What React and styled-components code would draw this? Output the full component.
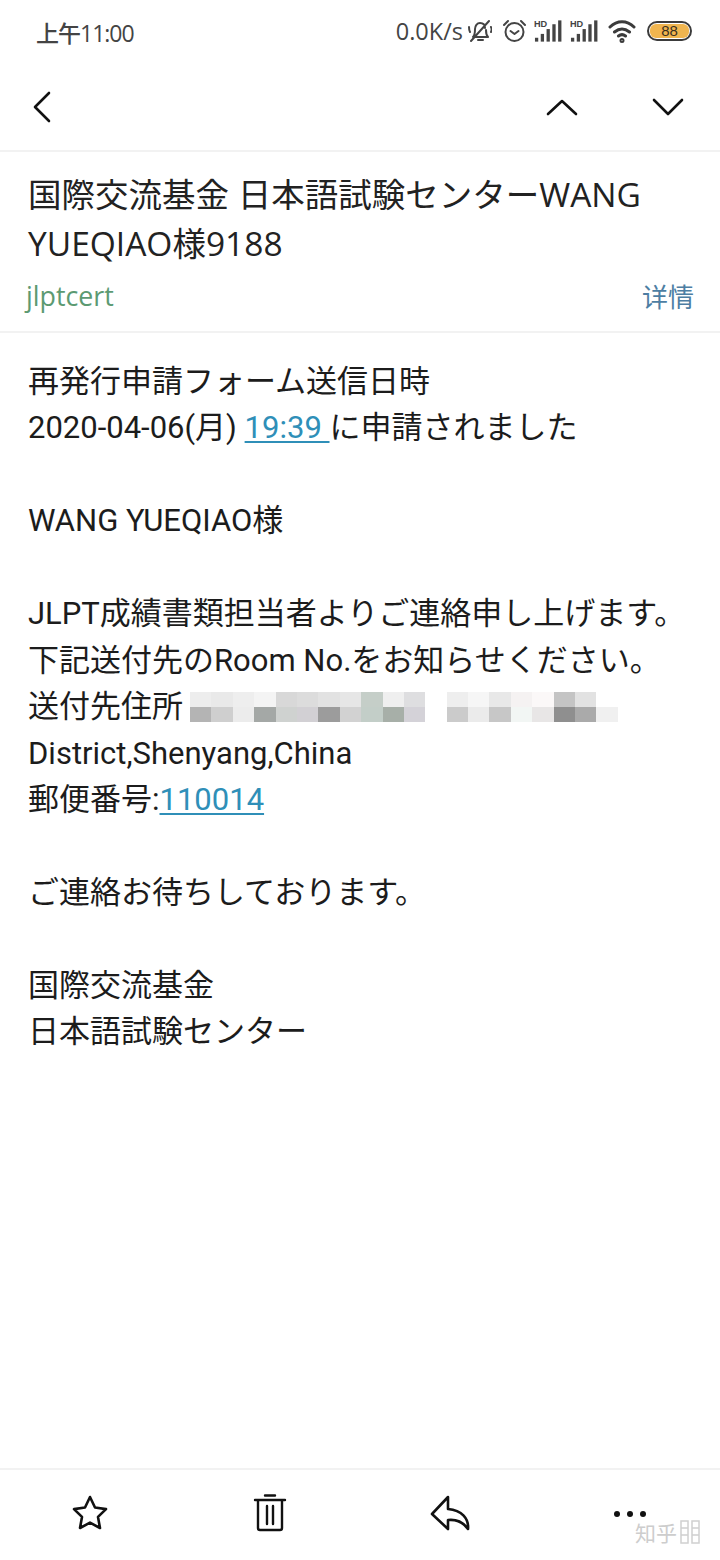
import React from "react";
import styled, { createGlobalStyle } from "styled-components";

const Global = createGlobalStyle`
  html, body { margin: 0; padding: 0; background: #fff; }
  #root { width: 720px; height: 1560px; }
  * { box-sizing: border-box; }
`;

const Page = styled.div`
  position: relative;
  width: 720px;
  height: 1560px;
  display: flex;
  flex-direction: column;
  background: #fff;
  overflow: hidden;
  font-family: Roboto, "Noto Sans CJK JP", sans-serif;
  color: #1d1d1d;
`;

const StatusBar = styled.div`
  height: 64px;
  flex: none;
  display: flex;
  align-items: center;
  justify-content: space-between;
  padding: 0 28px 0 36px;
  color: #444;
  font-family: "Open Sans", "Noto Sans CJK SC", sans-serif;
`;

const Clock = styled.span`
  font-size: 23px;
  letter-spacing: -1px;
  font-weight: 500;
`;

const StatusIcons = styled.div`
  display: flex;
  align-items: center;
  margin-top: -2px;
`;

const Speed = styled.span`
  font-size: 23.5px;
  font-weight: 500;
  margin-right: 4px;
`;

const Toolbar = styled.div`
  height: 88px;
  flex: none;
  display: flex;
  align-items: center;
  justify-content: space-between;
  padding: 0 36px 0 32px;
  border-bottom: 2px solid #f2f2f2;
`;

const ToolGroup = styled.div`
  display: flex;
  gap: 74px;
`;

const Header = styled.div`
  flex: none;
  height: 181px;
  padding: 18px 26px 0 28px;
  border-bottom: 2px solid #f2f2f2;
`;

const Title = styled.h1`
  margin: 0;
  font-family: "Open Sans", "Noto Sans CJK JP", sans-serif;
  font-size: 33.5px;
  line-height: 49px;
  font-weight: 400;
  color: #222;
`;

const SenderRow = styled.div`
  display: flex;
  justify-content: space-between;
  align-items: center;
  margin-top: 9px;
  font-size: 26.8px;
`;

const Sender = styled.span`
  font-family: "Open Sans", sans-serif;
  color: #5c9a72;
  margin-left: -2px;
`;

const Details = styled.span`
  font-family: "Noto Sans CJK SC", sans-serif;
  font-size: 26px;
  color: #4d7ea3;
`;

const Body = styled.div`
  flex: 1;
  padding: 26px 28px 0;
  font-size: 31px;
  line-height: 46.45px;
  color: #1c1c1c;
`;

const Line = styled.div`
  height: 46.45px;
  white-space: nowrap;
`;

const AddressLine = styled(Line)`
  display: flex;
  align-items: center;
`;

const MailLink = styled.span`
  color: #2f8fb8;
  text-decoration: underline;
  text-underline-offset: 3px;
  text-decoration-thickness: 2px;
`;

const Mosaic = styled.span`
  display: grid;
  grid-template-columns: repeat(20, 21.4px);
  grid-auto-rows: 15px;
  margin-left: 7px;
`;

const Cell = styled.i`
  display: block;
  background: ${(p) => p.$c};
`;

const Footer = styled.div`
  flex: none;
  height: 92px;
  border-top: 2px solid #f2f2f2;
  display: grid;
  grid-template-columns: repeat(4, 1fr);
  padding: 4px 0 0;
`;

const FooterItem = styled.div`
  display: flex;
  justify-content: center;
  padding-top: 20px;
`;

const Watermark = styled.div`
  position: absolute;
  right: 20px;
  bottom: 15px;
  display: flex;
  align-items: center;
  gap: 3px;
  color: #cdcdcd;
  font-family: "Noto Sans CJK SC", sans-serif;
  font-size: 21px;
  line-height: 26px;
`;

const Battery = styled.span`
  width: 45px;
  height: 20px;
  border: 2px solid #3b3b3b;
  border-radius: 10px;
  padding: 1px;
  margin-left: 11px;
  display: flex;
`;

const BatteryFill = styled.span`
  flex: 1;
  border-radius: 6px;
  background: #f0b54f;
  color: #3b3020;
  font: 15px/14px "Liberation Sans", sans-serif;
  text-align: center;
`;

const IconSvg = styled.svg`
  flex: none;
  margin-left: ${(p) => p.$gap || 0}px;
`;

const Ico = ({ w = 32, h = 32, children, sw = 3, color = "#111", gap }) => (
  <IconSvg $gap={gap} width={w} height={h} viewBox={`0 0 ${w} ${h}`} fill="none" stroke={color} strokeWidth={sw} strokeLinecap="round" strokeLinejoin="round">
    {children}
  </IconSvg>
);

const Signal = ({ gap }) => (
  <IconSvg $gap={gap} width="28" height="24" viewBox="0 0 29 24">
    <text x="0" y="8" fontSize="9.5" fontWeight="700" fontFamily="Liberation Sans" fill="#444">HD</text>
    <g fill="#444">
      <rect x="1" y="19" width="3.4" height="4" />
      <rect x="7" y="15" width="3.4" height="8" />
      <rect x="13" y="10" width="3.4" height="13" />
      <rect x="19" y="5" width="3.4" height="18" />
      <rect x="25" y="1" width="3.4" height="22" />
    </g>
  </IconSvg>
);

const mosaic = [
  "#ededed","#e9e9e9","#eeeeee","#f4f4f4","#d8d8d8","#dcdcdc","#e2e2e2","#e6e6e6","#c5cec8","#efefef","#dedee0","#fff","#eeeeee","#f6f6f6","#e8e8e8","#f5f2f2","#fbf8f8","#c4c4c4","#e2e2e2","#fff",
  "#b4b4b4","#cfcfcf","#ececec","#a4a8a6","#cfd2d0","#d2d0d4","#9c9c9c","#d2d2d2","#c3cec8","#a7afa8","#d4d2d8","#fff","#cbcbcb","#ebebeb","#c7c7c7","#f2f6f4","#e8e6e6","#8f8f8f","#aaaaaa","#f0f0f0",
];

const Pixelated = () => (
  <Mosaic aria-hidden="true">
    {mosaic.map((c, i) => <Cell key={i} $c={c} />)}
  </Mosaic>
);

export default function App() {
  return (
    <Page>
      <Global />
      <StatusBar>
        <Clock>上午11:00</Clock>
        <StatusIcons>
          <Speed>0.0K/s</Speed>
          <Ico w={25} h={26} sw={2} color="#444">
            <path d="M6 19c2-2 2-5 2-8 0-3 2-6 5-6s5 2 5 5M19 12c0 3 0 5 2 7H6M11 22h5M4 23 22 3M2 9c0 2 0 3 1 5M24 9c1 2 1 3 0 5" />
          </Ico>
          <Ico w={25} h={26} sw={2} color="#444" gap={10}>
            <circle cx="12.5" cy="14" r="9" />
            <path d="M8.5 13l4 3 4-3M2 7l4-4M23 7l-4-4" />
          </Ico>
          <Signal gap={7} />
          <Signal gap={8} />
          <Ico w={28} h={24} sw={3} color="#3b3b3b" gap={10}>
            <path d="M2 8c7-7 17-7 24 0M6.500 13c5-4 10-4 15 0M10.500 17c2.500-2 4.500-2 7 0" />
            <circle cx="14" cy="21.5" r="1" />
          </Ico>
          <Battery><BatteryFill>88</BatteryFill></Battery>
        </StatusIcons>
      </StatusBar>

      <Toolbar>
        <Ico w={20} h={32} sw={2.6}><path d="M17 2 3 16l14 14" /></Ico>
        <ToolGroup>
          <Ico w={32} h={18} sw={2.6}><path d="M2 16 16 3l14 13" /></Ico>
          <Ico w={32} h={18} sw={2.6}><path d="M2 2l14 14L30 2" /></Ico>
        </ToolGroup>
      </Toolbar>

      <Header>
        <Title>国際交流基金 日本語試験センターWANG YUEQIAO様9188</Title>
        <SenderRow>
          <Sender>jlptcert</Sender>
          <Details>详情</Details>
        </SenderRow>
      </Header>

      <Body>
        <Line>再発行申請フォーム送信日時</Line>
        <Line>2020-04-06(月) <MailLink>19:39 </MailLink>に申請されました</Line>
        <Line />
        <Line>WANG YUEQIAO様</Line>
        <Line />
        <Line>JLPT成績書類担当者よりご連絡申し上げます。</Line>
        <Line>下記送付先のRoom No.をお知らせください。</Line>
        <AddressLine>送付先住所<Pixelated /></AddressLine>
        <Line>District,Shenyang,China</Line>
        <Line>郵便番号:<MailLink>110014</MailLink></Line>
        <Line />
        <Line>ご連絡お待ちしております。</Line>
        <Line />
        <Line>国際交流基金</Line>
        <Line>日本語試験センター</Line>
      </Body>

      <Footer>
        <FooterItem>
          <Ico w={38} h={36} sw={2.6}>
            <path d="M19 3l5 10.5 11 1.600-8 7.800 2 11.100-10-5.400-10 5.400 2-11.100-8-7.800 11-1.600z" />
          </Ico>
        </FooterItem>
        <FooterItem>
          <Ico w={34} h={38} sw={2.4}>
            <path d="M2 6h30M12 1.500h10M5 6v28a2 2 0 0 0 2 2h20a2 2 0 0 0 2-2V6M14 12v18M20 12v18" />
          </Ico>
        </FooterItem>
        <FooterItem>
          <Ico w={40} h={38} sw={2.6}>
            <path d="M18 3 2 20l16 15v-9c9-1 15 2 20 9 1-10-6-19-20-20z" />
          </Ico>
        </FooterItem>
        <FooterItem>
          <svg width="34" height="36" viewBox="0 0 34 36" fill="#111">
            <circle cx="4" cy="20" r="3" /><circle cx="17" cy="20" r="3" /><circle cx="30" cy="20" r="3" />
          </svg>
        </FooterItem>
      </Footer>

      <Watermark>
        知乎
        <svg width="20" height="24" viewBox="0 0 20 24" fill="none" stroke="#d0d0d0" strokeWidth="1.5">
          <rect x="1" y="1" width="7" height="22" /><rect x="12" y="1" width="7" height="22" />
          <path d="M1 8h7M1 15h7M12 8h7M12 15h7" />
        </svg>
      </Watermark>
    </Page>
  );
}
